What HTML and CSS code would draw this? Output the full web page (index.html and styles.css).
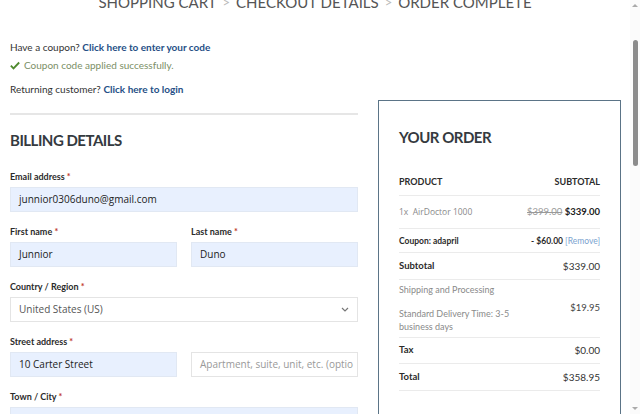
FILE: index.html
```html
<!DOCTYPE html>
<html>
<head>
<meta charset="utf-8">
<link rel="stylesheet" href="styles.css">
</head>
<body>
<div class="page">
  <main class="main">
    <nav class="crumbs">
      <span>SHOPPING CART</span><span class="sep">&gt;</span><span>CHECKOUT DETAILS</span><span class="sep">&gt;</span><span>ORDER COMPLETE</span>
    </nav>

    <div class="notices">
      <p class="notice">Have a coupon? <a href="#">Click here to enter your code</a></p>
      <p class="notice success"><svg class="check" viewBox="0 0 12 10" width="10" height="9"><path d="M1 5.2 L4.2 8.4 L11 1.4" fill="none" stroke="#4f8a2e" stroke-width="2.2"/></svg>Coupon code applied successfully.</p>
      <p class="notice login">Returning customer? <a href="#">Click here to login</a></p>
    </div>

    <div class="columns">
      <section class="billing">
        <hr class="rule">
        <h3 class="title">BILLING DETAILS</h3>

        <div class="field">
          <label class="label">Email address <span class="req">*</span></label>
          <div class="input filled">junnior0306duno@gmail.com</div>
        </div>

        <div class="field row">
          <div class="half">
            <label class="label">First name <span class="req">*</span></label>
            <div class="input filled">Junnior</div>
          </div>
          <div class="half">
            <label class="label">Last name <span class="req">*</span></label>
            <div class="input filled">Duno</div>
          </div>
        </div>

        <div class="field">
          <label class="label">Country / Region <span class="req">*</span></label>
          <div class="input select"><span>United States (US)</span><svg viewBox="0 0 8 5" width="8" height="5"><path d="M1 1 L4 4 L7 1" fill="none" stroke="#777" stroke-width="1.2"/></svg></div>
        </div>

        <div class="field">
          <label class="label">Street address <span class="req">*</span></label>
          <div class="row">
            <div class="input filled half">10 Carter Street</div>
            <div class="input half placeholder">Apartment, suite, unit, etc. (optio</div>
          </div>
        </div>

        <div class="field">
          <label class="label">Town / City <span class="req">*</span></label>
          <div class="input filled"></div>
        </div>
      </section>

      <aside class="order">
        <h3 class="title">YOUR ORDER</h3>
        <div class="orow head"><span>PRODUCT</span><span>SUBTOTAL</span></div>
        <div class="orow item"><span class="muted">1x&nbsp; AirDoctor 1000</span><span><del>$399.00</del> <b>$339.00</b></span></div>
        <div class="orow coupon"><span>Coupon: adapril</span><span>- $60.00 <a href="#" class="remove">[Remove]</a></span></div>
        <div class="orow strong"><span>Subtotal</span><span class="val">$339.00</span></div>
        <div class="orow ship">
          <div class="muted shipinfo">
            <div>Shipping and Processing</div>
            <div class="delivery">Standard Delivery Time: 3-5<br>business days</div>
          </div>
          <span class="shipval">$19.95</span>
        </div>
        <div class="orow strong tax"><span>Tax</span><span class="val">$0.00</span></div>
        <div class="orow strong total"><span>Total</span><span class="val">$358.95</span></div>
      </aside>
    </div>
  </main>

  <div class="scrollbar">
    <span class="arrow up"></span>
    <span class="thumb"></span>
    <span class="track"></span>
    <span class="arrow down"></span>
  </div>
</div>
</body>
</html>
```

FILE: styles.css
```css
html, body {
  margin: 0;
  padding: 0;
  background: #fff;
  height: 100%;
  overflow: hidden;
}
body {
  font-family: "Lato", "Liberation Sans", sans-serif;
  color: #333;
}
.page {
  display: flex;
  height: 414px;
  overflow: hidden;
}
.main {
  width: 620px;
  padding-left: 10px;
  flex: none;
}
.crumbs {
  margin-top: -10px;
  height: 24px;
  line-height: 24px;
  font-size: 15px;
  color: #555;
  display: flex;
  justify-content: center;
  padding-right: 10px;
  white-space: nowrap;
}
.crumbs .sep {
  color: #bbb;
  margin: 0 6px;
  font-size: 13px;
}
.notices {
  margin-top: 24px;
}
.notice {
  margin: 0;
  font-size: 10px;
  line-height: 18px;
  color: #333;
}
.notice a {
  color: #264f86;
  font-weight: 700;
  text-decoration: none;
}
.notice.success {
  color: #7b8f66;
  display: flex;
  align-items: center;
  gap: 4px;
}
.notice.login {
  margin-top: 6px;
}
.columns {
  display: grid;
  grid-template-columns: 348px 243px;
  gap: 20px;
  margin-top: 2px;
}
.rule {
  margin: 13px 0 0;
  border: 0;
  border-top: 2px solid #e6e6e6;
  height: 0;
}
.title {
  margin: 0;
  font-size: 15px;
  letter-spacing: -0.5px;
  line-height: 22px;
  font-weight: 700;
  color: #353a40;
}
.billing .title {
  margin-top: 14px;
  margin-bottom: 19px;
}
.field {
  margin-bottom: 13px;
}
.label {
  display: block;
  font-size: 9px;
  line-height: 14px;
  font-weight: 700;
  color: #2b2b2b;
  margin-bottom: 3px;
}
.req {
  color: #c0392b;
}
.row {
  display: flex;
  gap: 14px;
}
.half {
  flex: 1;
  min-width: 0;
}
.input {
  box-sizing: border-box;
  height: 25px;
  border: 1px solid #e4e4e4;
  background: #fff;
  font-family: "Open Sans", "Noto Sans", sans-serif;
  font-size: 10px;
  line-height: 23px;
  padding: 0 8px;
  color: #222;
  white-space: nowrap;
  overflow: hidden;
}
.input.filled {
  background: #e8f0fe;
  border-color: #e1e8f3;
}
.input.placeholder {
  color: #999;
}
.input.select {
  display: flex;
  justify-content: space-between;
  align-items: center;
  color: #555;
}
.order {
  border: 1.5px solid #5b7487;
  border-bottom: 0;
  padding: 25px 20px 0;
  height: 330px;
  box-sizing: border-box;
}
.order .title {
  margin-bottom: 20px;
}
.orow {
  display: flex;
  justify-content: space-between;
  align-items: center;
  border-bottom: 1.5px solid #ebebeb;
  font-size: 10px;
  line-height: 14px;
}
.orow.head {
  font-weight: 700;
  font-size: 9px;
  padding: 7px 0 6px;
  color: #2b2b2b;
}
.orow.item {
  height: 32px;
  font-size: 9px;
}
.muted {
  color: #8a8a8a;
}
.orow.item .muted {
  font-family: "Open Sans", "Noto Sans", sans-serif;
  font-size: 8.5px;
}
.orow.item del {
  color: #999;
  font-size: 9.5px;
}
.orow.item b {
  color: #222;
  font-size: 9.5px;
}
.orow.coupon {
  height: 23px;
  font-size: 8.5px;
  font-weight: 700;
  color: #2b2b2b;
}
.remove {
  color: #7aa3cf;
  font-weight: 400;
  text-decoration: none;
}
.orow.strong {
  height: 25.5px;
  font-size: 9.5px;
}
.orow.strong > span:first-child {
  font-weight: 700;
  color: #2b2b2b;
}
.orow .val {
  color: #333;
  font-size: 10px;
}
.orow.tax {
  height: 25px;
}
.orow.total {
  height: 26.5px;
}
.orow.ship {
  height: 58px;
  align-items: flex-start;
  padding-top: 3px;
  box-sizing: border-box;
  font-size: 9px;
}
.shipinfo {
  line-height: 13px;
}
.delivery {
  margin-top: 11px;
}
.shipval {
  margin-top: 18px;
  color: #444;
  font-size: 9.5px;
}
.scrollbar {
  width: 10px;
  flex: none;
  margin-left: auto;
  background: #fbfbfb;
  display: flex;
  flex-direction: column;
  align-items: center;
  padding: 4px 0;
  box-sizing: border-box;
}
.arrow {
  width: 0;
  height: 0;
  border-left: 3px solid transparent;
  border-right: 3px solid transparent;
}
.arrow.up {
  border-bottom: 3px solid #aaa;
}
.arrow.down {
  border-top: 3px solid #aaa;
}
.thumb {
  width: 5px;
  height: 126px;
  border-radius: 3px;
  background: #8c8c8c;
  margin-top: 33px;
}
.track {
  flex: 1;
}
```
